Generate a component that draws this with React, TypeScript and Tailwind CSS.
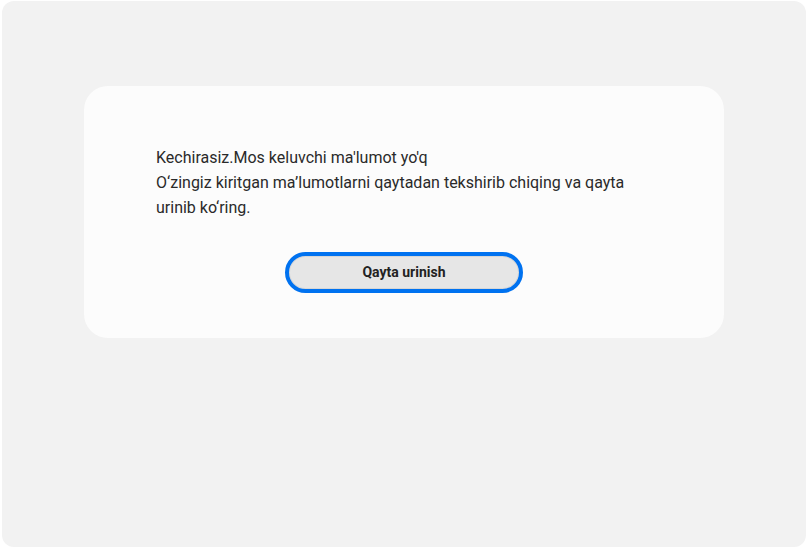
export default function App() {
  return (
    <div className="w-[807px] h-[550px] bg-white pt-px pl-[2px]" style={{ fontFamily: 'Roboto, "Noto Sans", sans-serif' }}>
      <div className="w-[804px] h-[546px] bg-[#f2f2f2] rounded-[12px] pt-[85px]">
        <div className="mx-auto w-[640px] bg-[#fcfcfc] rounded-[24px] pl-[72px] pr-[72px] pt-[59px] pb-[45px]">
          <div className="text-[16px] leading-[25px] text-[#2a2a2a]">
            <p>Kechirasiz.Mos keluvchi ma'lumot yo'q</p>
            <p>O‘zingiz kiritgan ma’lumotlarni qaytadan tekshirib chiqing va qayta urinib ko‘ring.</p>
          </div>
          <div className="mt-[32px] flex justify-center">
            <button className="w-[238px] h-[41px] rounded-full border-[4px] border-[#0072f0] bg-[#e6e6e6] shadow-[inset_0_0_0_1px_#d6d6d6] text-[14px] font-bold text-[#222]">
              Qayta urinish
            </button>
          </div>
        </div>
      </div>
    </div>
  );
}
